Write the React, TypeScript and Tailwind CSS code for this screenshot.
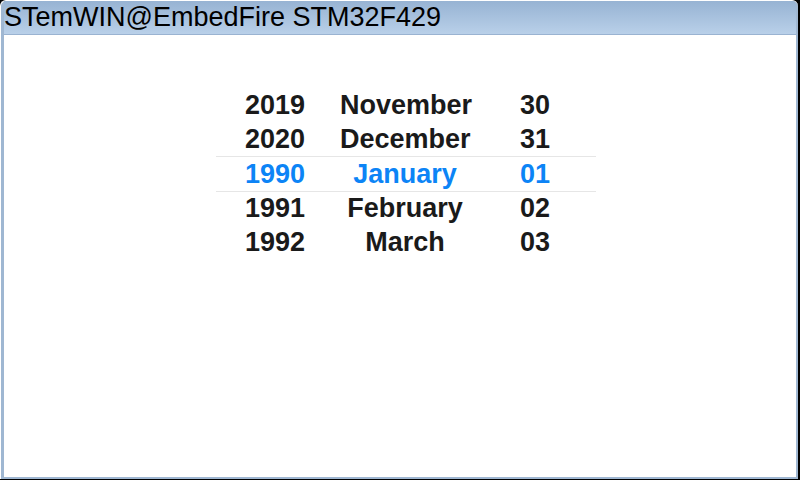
const years = ["2019", "2020", "1990", "1991", "1992"];
const months = ["November", "December", "January", "February", "March"];
const days = ["30", "31", "01", "02", "03"];

export default function App() {
  return (
    <div
      className="h-[480px] w-[800px] overflow-hidden bg-black"
      style={{ fontFamily: '"Liberation Sans", Arial, sans-serif' }}
    >
      <div className="h-[479px] w-[798px] rounded-t-[6px] border-t border-l border-white bg-[#9fb7d2]">
        <div className="flex h-full flex-col pl-[3px] pr-[2px] pb-[2px]">
          <div className="flex h-[34px] shrink-0 items-center rounded-tr-[4px] border-b border-[#9ab3d1] bg-gradient-to-b from-[#97b3d3] to-[#b9d0e9] pl-0 text-[27px] leading-none text-black">
            STemWIN@EmbedFire STM32F429
          </div>
          <div className="flex-1 bg-white pt-[50px] pl-[206px]">
            <div className="relative w-[390px]">
              <div className="absolute top-[71px] left-[6px] right-[4px] h-[36px] border-y border-[#e6e6e6]" />
              <div className="relative flex flex-col">
                {years.map((y, i) => {
                  const sel = i === 2;
                  return (
                    <div
                      key={y}
                      className={`grid h-[34.25px] grid-cols-3 items-center text-center text-[27px] font-bold ${
                        sel ? "text-[#0c84f6]" : "text-[#1a1a1a]"
                      }`}
                    >
                      <span>{y}</span>
                      <span>{months[i]}</span>
                      <span>{days[i]}</span>
                    </div>
                  );
                })}
              </div>
            </div>
          </div>
        </div>
      </div>
    </div>
  );
}
